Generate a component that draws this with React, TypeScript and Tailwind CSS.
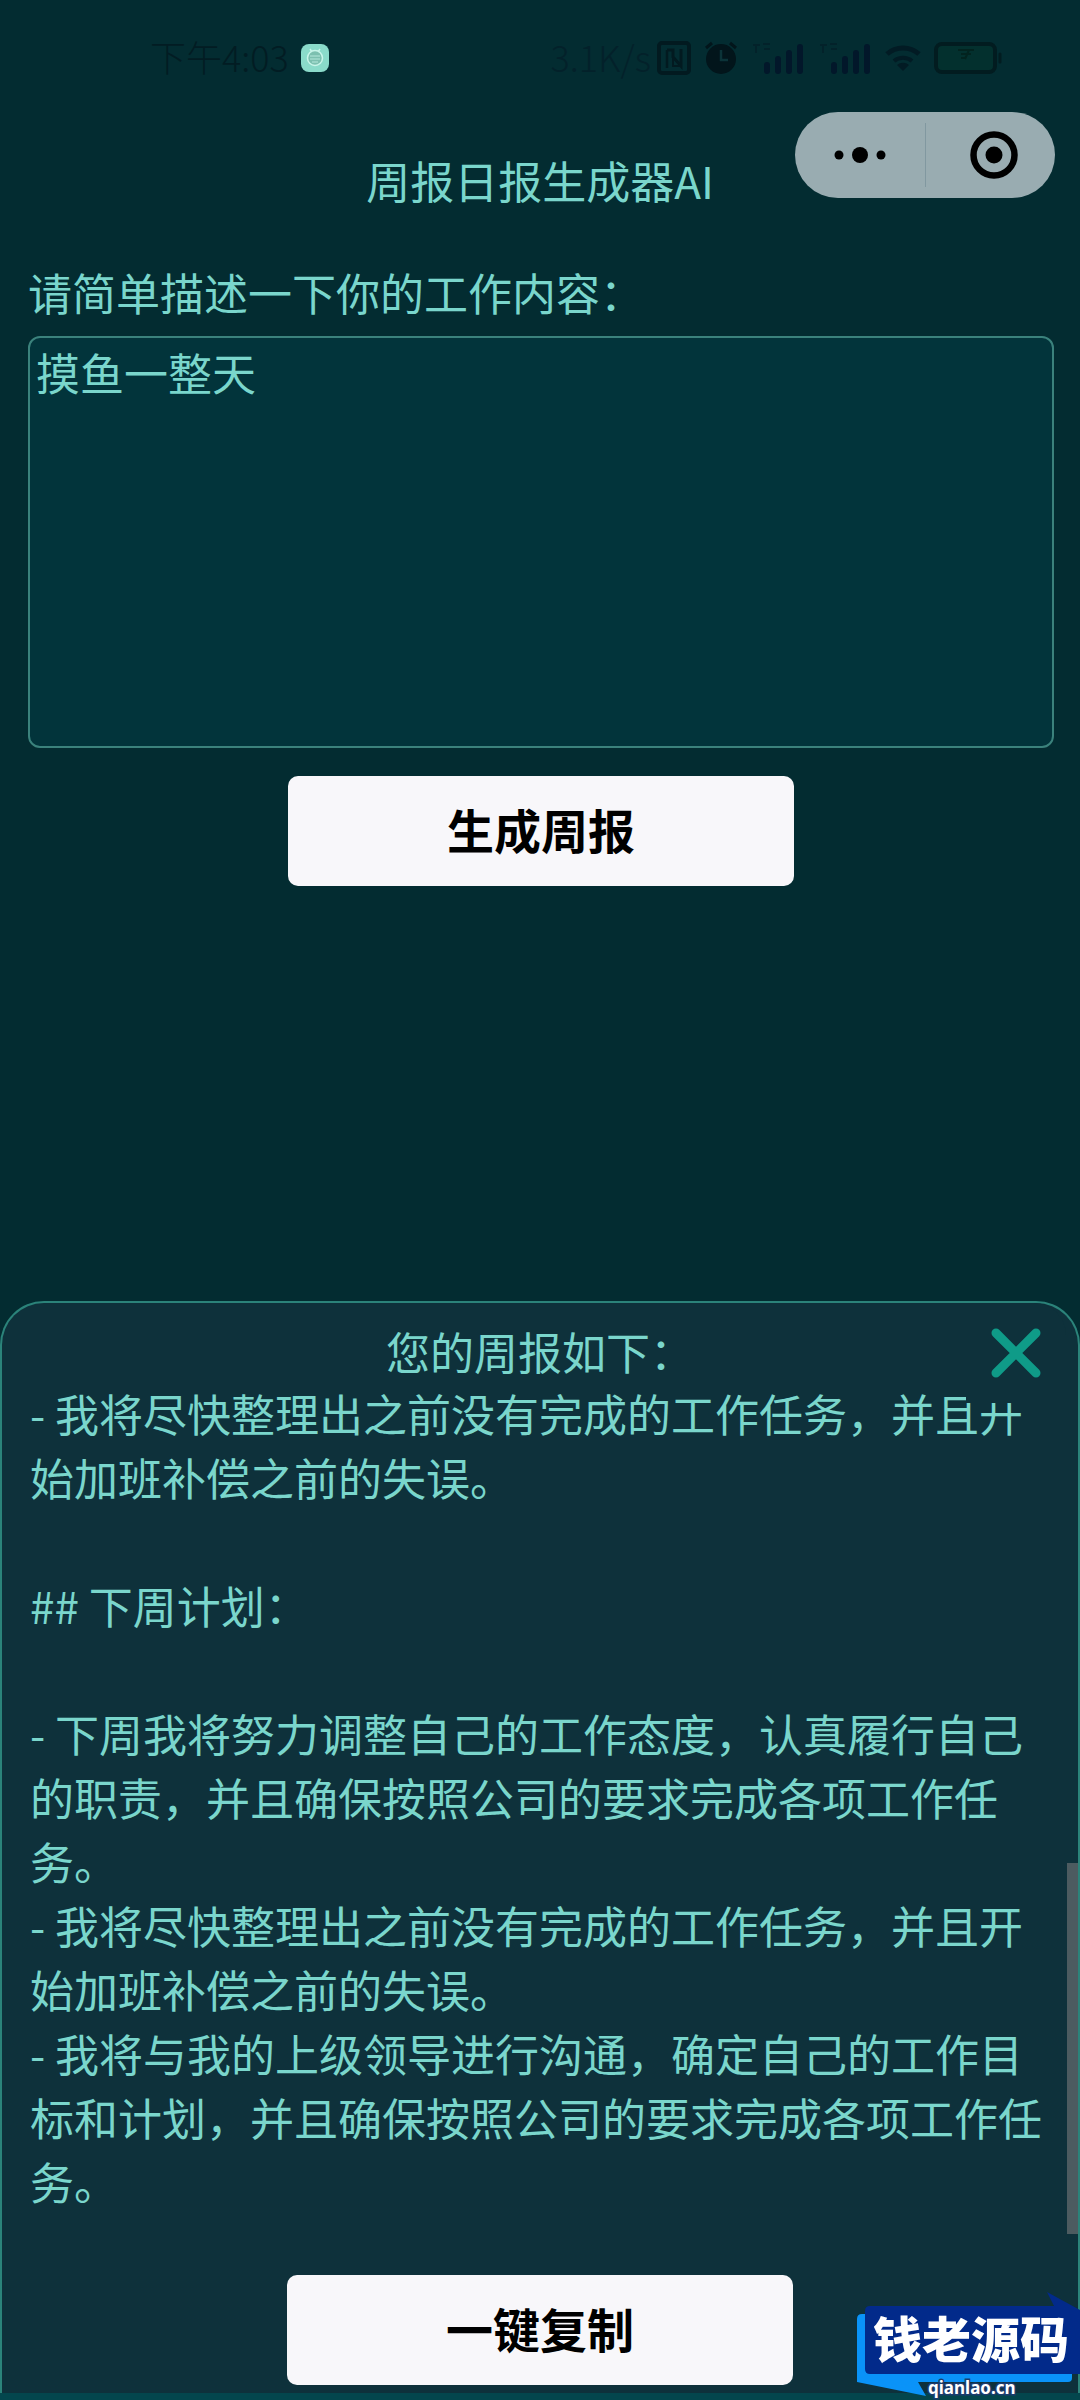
import { useState } from "react";

const REPORT = `- 我将尽快整理出之前没有完成的工作任务，并且开始加班补偿之前的失误。

## 下周计划：

- 下周我将努力调整自己的工作态度，认真履行自己的职责，并且确保按照公司的要求完成各项工作任务。
- 我将尽快整理出之前没有完成的工作任务，并且开始加班补偿之前的失误。
- 我将与我的上级领导进行沟通，确定自己的工作目标和计划，并且确保按照公司的要求完成各项工作任务。`;

function AppBadge() {
  return (
    <svg width="28" height="28" viewBox="0 0 28 28" fill="none" aria-hidden="true">
      <rect width="28" height="28" rx="8" fill="#8adbca" />
      <path d="M9 5l2 3h6l2-3" stroke="#c9f5ea" strokeWidth="1.5" />
      <circle cx="14" cy="14" r="7.5" fill="#7cc0b0" stroke="#c9f5ea" strokeWidth="1.5" />
      <path d="M9 12h10M9 15h10M11 18h6" stroke="#b5e8dc" strokeWidth="1" />
    </svg>
  );
}

function NfcIcon() {
  return (
    <svg width="34" height="34" viewBox="0 0 34 34" fill="none" stroke="#021a20" aria-hidden="true">
      <rect x="2" y="2" width="30" height="30" rx="3" strokeWidth="4" />
      <path d="M10 27V9" strokeWidth="2.5" />
      <path d="M10 9h6v7l8 9V8" strokeWidth="3" />
      <path d="M16 16v9h8" strokeWidth="2" />
    </svg>
  );
}

function AlarmIcon() {
  return (
    <svg width="34" height="34" viewBox="0 0 34 34" fill="none" aria-hidden="true">
      <circle cx="17" cy="18" r="15" fill="#02151b" />
      <path d="M2 7l6-5M32 7l-6-5" stroke="#02151b" strokeWidth="3" />
      <path d="M17 9v10h7" stroke="#0b3338" strokeWidth="2.5" />
    </svg>
  );
}

function SignalIcon() {
  return (
    <svg width="54" height="34" viewBox="0 0 54 34" fill="none" aria-hidden="true">
      <path d="M2 4h7M5 4v8M12 3h7M13 8h6" stroke="#03222a" strokeWidth="2" />
      <path d="M16 30v-6M27 30V18M38 30V12M49 30V6" stroke="#02172a" strokeWidth="6" strokeLinecap="round" />
    </svg>
  );
}

function WifiIcon() {
  return (
    <svg width="36" height="28" viewBox="0 0 36 28" fill="none" stroke="#021b24" aria-hidden="true">
      <path d="M2 10a24 24 0 0 1 32 0" strokeWidth="5" />
      <path d="M9 17a14 14 0 0 1 18 0" strokeWidth="4" />
      <path d="M18 27l-6-6a9 9 0 0 1 12 0z" fill="#021b24" stroke="none" />
    </svg>
  );
}

function BatteryIcon() {
  return (
    <svg width="68" height="32" viewBox="0 0 68 32" fill="none" aria-hidden="true">
      <rect x="2" y="2" width="59" height="28" rx="6" fill="#03302e" stroke="#021c20" strokeWidth="4" />
      <path d="M66 12v8" stroke="#021c20" strokeWidth="3" strokeLinecap="round" />
      <path d="M24 8h16M27 12h10M27 16h4M35 8l-4 9" stroke="#02231f" strokeWidth="2" />
    </svg>
  );
}

function StatusBar() {
  return (
    <div className="flex h-20 items-end justify-between pr-[78px] pl-[150px] text-[36px] leading-10 font-light text-[#021c23]">
      <div className="flex items-center gap-3">
        <span className="pb-1">下午4:03</span>
        <AppBadge />
      </div>
      <div className="flex items-center gap-[13px]">
        <div className="flex items-center gap-1.5">
          <span className="pb-1 text-[#03212a]">3.1K/s</span>
          <NfcIcon />
        </div>
        <AlarmIcon />
        <SignalIcon />
        <SignalIcon />
        <WifiIcon />
        <BatteryIcon />
      </div>
    </div>
  );
}

/** Host app's menu / close pill in the top right corner. */
function Capsule() {
  return (
    <div className="absolute top-8 right-[25px] flex h-[86px] w-[260px] items-center rounded-full bg-[#99acb1]">
      <button type="button" aria-label="更多" className="flex w-1/2 justify-center">
        <svg width="52" height="20" viewBox="0 0 52 20" aria-hidden="true">
          <circle cx="5" cy="10" r="4.5" />
          <circle cx="26" cy="10" r="8" />
          <circle cx="47" cy="10" r="4.5" />
        </svg>
      </button>
      <button type="button" aria-label="关闭小程序" className="flex h-16 w-1/2 items-center justify-center border-l border-[#8198a0] pl-1.5">
        <svg width="48" height="48" viewBox="0 0 48 48" aria-hidden="true">
          <circle cx="24" cy="24" r="20.5" fill="none" stroke="#000" strokeWidth="6.5" />
          <circle cx="24" cy="24" r="8.5" />
        </svg>
      </button>
    </div>
  );
}

function PrimaryButton({ children, onClick }: { children: string; onClick?: () => void }) {
  return (
    <button
      type="button"
      onClick={onClick}
      className="mx-auto block h-[110px] w-[506px] rounded-[10px] bg-[#f8f7fa] pb-1 text-[47px] font-bold text-black"
    >
      {children}
    </button>
  );
}

function Watermark() {
  return (
    <div className="absolute right-0 bottom-0 h-[108px] w-[224px]">
      <svg width="224" height="108" viewBox="0 0 224 108" aria-hidden="true">
        <path d="M6 22h206q4 0 4 4v60q0 4-4 4H62l8 14L1 90V27q0-5 5-5z" fill="#0a93f8" />
        <path d="M14 14h184L191 0l33 18v64H14q-5 0-5-5V19q0-5 5-5z" fill="#022a8a" />
      </svg>
      <div className="absolute top-3.5 left-[17px] text-[49px] leading-[62px] font-black whitespace-nowrap text-white">
        钱老源码
      </div>
      <div className="absolute bottom-0.5 left-[72px] font-['Noto_Sans','Noto_Sans_CJK_SC',sans-serif] text-[17px] leading-5 font-bold text-white [paint-order:stroke] [-webkit-text-stroke:3px_#1b3c6e]">
        qianlao.cn
      </div>
    </div>
  );
}

export default function App() {
  const [content, setContent] = useState("摸鱼一整天");
  const [open, setOpen] = useState(true);

  return (
    <div className="relative flex min-h-screen flex-col overflow-hidden bg-[#032c31] font-['Noto_Sans_CJK_SC',sans-serif] text-[44px] leading-[64px] text-[#7ad6cc]">
      <StatusBar />
      <header className="relative pt-[68px] text-center">
        <h1>周报日报生成器AI</h1>
        <Capsule />
      </header>

      <main className="pt-12 pr-[26px] pl-7">
        <label htmlFor="work" className="block">
          请简单描述一下你的工作内容：
        </label>
        <textarea
          id="work"
          value={content}
          onChange={(e) => setContent(e.target.value)}
          className="mt-3 mb-7 block h-[412px] w-full resize-none rounded-xl border-2 border-[#3b827c] bg-[#02343b] px-1.5 py-0.5 outline-none"
        />
        <PrimaryButton>生成周报</PrimaryButton>
      </main>

      {open && (
        <section
          aria-label="周报结果"
          className="relative mt-auto rounded-t-[44px] border-2 border-b-0 border-[#2b837a] bg-[#0e313b]"
        >
          <h2 className="h-[78px] pt-4 text-center">您的周报如下：</h2>
          <div className="h-[854px] overflow-hidden px-7 whitespace-pre-wrap">{REPORT}</div>
          <button
            type="button"
            aria-label="关闭"
            onClick={() => setOpen(false)}
            className="absolute top-0 right-3 flex size-[100px] items-center justify-center rounded-tr-[32px] bg-[#0e313b]"
          >
            <svg width="50" height="50" viewBox="0 0 50 50" fill="none" aria-hidden="true">
              <path d="M5 5l40 40M45 5L5 45" stroke="#0f9b88" strokeWidth="9" strokeLinecap="round" />
            </svg>
          </button>
          <span className="absolute right-0 bottom-[166px] h-[371px] w-[11px] bg-[#4c5b60]" />
          <div className="pt-10 pb-2">
            <PrimaryButton onClick={() => navigator.clipboard?.writeText(REPORT)}>一键复制</PrimaryButton>
          </div>
          <div className="-mx-0.5 h-[7px] bg-[#03464d]" />
        </section>
      )}
      <Watermark />
    </div>
  );
}
